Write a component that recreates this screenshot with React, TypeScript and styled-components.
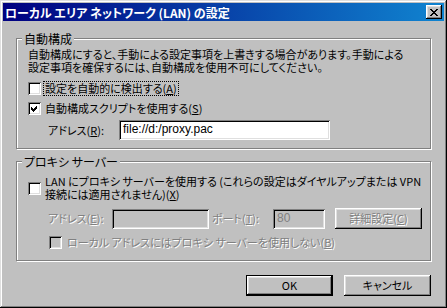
import React from 'react';
import styled, { createGlobalStyle, css } from 'styled-components';

const GlobalStyle = createGlobalStyle`
	html, body {
		margin: 0;
		padding: 0;
		background: #c0c0c0;
	}
`;

const raised = css`
	box-shadow: inset -1px -1px #000, inset 1px 1px #fff, inset -2px -2px #808080,
		inset 2px 2px #dfdfdf;
`;
const sunken = css`
	box-shadow: inset 1px 1px #808080, inset -1px -1px #fff, inset 2px 2px #000,
		inset -2px -2px #dfdfdf;
`;
const disabledText = css`
	color: #808080;
	text-shadow: 1px 1px 0 #fff;
`;

const Window = styled.div`
	width: 447px;
	height: 308px;
	box-sizing: border-box;
	padding: 3px;
	background: #c0c0c0;
	box-shadow: inset -1px -1px #000, inset 1px 1px #dfdfdf, inset -2px -2px #808080,
		inset 2px 2px #fff;
	display: flex;
	flex-direction: column;
	font-family: 'Noto Sans CJK JP', 'Liberation Sans', sans-serif;
	font-size: 11px;
	line-height: 13px;
	font-feature-settings: 'palt';
	color: #000;
`;

const TitleBar = styled.div`
	height: 18px;
	flex: 0 0 18px;
	display: flex;
	align-items: center;
	padding: 0 2px;
	background: linear-gradient(to right, #000080, #1084d0);
`;
const TitleText = styled.span`
	color: #fff;
	font-size: 12px;
	font-weight: 700;
	white-space: nowrap;
`;
const CloseButton = styled.span`
	margin-left: auto;
	width: 16px;
	height: 14px;
	background: #c0c0c0;
	${raised};
	display: flex;
	align-items: center;
	justify-content: center;
	padding-right: 1px;
	box-sizing: border-box;
`;

const Body = styled.div`
	display: flex;
	flex-direction: column;
	padding: 11px 13px 0 13px;
`;

const Group = styled.fieldset<{ $gap?: number }>`
	margin: ${(p) => p.$gap ?? 0}px 0 0 0;
	padding: 0;
	min-width: 0;
	border: 1px solid #808080;
	box-shadow: inset 1px 1px #fff, 1px 1px #fff;
`;
const Legend = styled.legend`
	margin-left: 5px;
	padding: 0 2px;
	font-size: 12px;
	line-height: 13px;
	background: #c0c0c0;
`;
const GroupBody = styled.div<{ $top: number; $bottom: number }>`
	display: flex;
	flex-direction: column;
	padding: ${(p) => p.$top}px 11px ${(p) => p.$bottom}px 11px;
`;

const Description = styled.p`
	margin: 0;
	white-space: nowrap;
`;

const Row = styled.div<{ $top: number; $indent?: number }>`
	display: flex;
	align-items: center;
	margin-top: ${(p) => p.$top}px;
	padding-left: ${(p) => p.$indent ?? 0}px;
	min-height: 16px;
`;

const Box = styled.span<{ $disabled?: boolean }>`
	flex: 0 0 13px;
	width: 13px;
	height: 13px;
	box-sizing: border-box;
	background: ${(p) => (p.$disabled ? '#c0c0c0' : '#fff')};
	${sunken};
	display: flex;
`;

const CheckLabel = styled.span<{ $focused?: boolean; $disabled?: boolean; $gap?: number }>`
	margin-left: ${(p) => p.$gap ?? 2}px;
	padding: 0 1px;
	border: 1px ${(p) => (p.$focused ? 'dotted #000' : 'solid transparent')};
	white-space: nowrap;
	${(p) => p.$disabled && disabledText};
`;

const Key = styled.span`
	text-decoration: underline;
	text-underline-offset: 1px;
`;

const FieldLabel = styled.span<{ $width: number; $left?: number; $disabled?: boolean }>`
	flex: 0 0 ${(p) => p.$width}px;
	margin-left: ${(p) => p.$left ?? 0}px;
	white-space: nowrap;
	${(p) => p.$disabled && disabledText};
`;

const TextBox = styled.div<{ $width: number; $disabled?: boolean }>`
	flex: 0 0 ${(p) => p.$width}px;
	height: 20px;
	box-sizing: border-box;
	padding: 3px 3px 0 4px;
	background: ${(p) => (p.$disabled ? '#c0c0c0' : '#fff')};
	${sunken};
	white-space: nowrap;
	font-size: 12px;
	color: ${(p) => (p.$disabled ? '#808080' : '#000')};
	font-family: 'Liberation Sans', sans-serif;
`;

const PushButton = styled.div<{ $default?: boolean; $disabled?: boolean; $left?: number }>`
	flex: 0 0 87px;
	height: 21px;
	margin-left: ${(p) => p.$left ?? 0}px;
	box-sizing: border-box;
	display: flex;
	align-items: center;
	justify-content: center;
	background: #c0c0c0;
	white-space: nowrap;
	${(p) =>
		p.$default
			? css`
					border: 1px solid #000;
					box-shadow: inset -1px -1px #000, inset 1px 1px #fff, inset -2px -2px #808080,
						inset 2px 2px #dfdfdf;
			  `
			: raised};
	${(p) => p.$disabled && disabledText};
`;

const Footer = styled.div`
	display: flex;
	justify-content: flex-end;
	gap: 11px;
	margin-top: 14px;
`;

const closeRows = ['11000011', '01100110', '00111100', '00011000', '00111100', '01100110', '11000011'];
const closePath = closeRows
	.map((row, y) =>
		row
			.split('')
			.map((c, x) => (c === '1' ? `M${x} ${y}h1v1h-1z` : ''))
			.join('')
	)
	.join('');

const CloseGlyph = () => (
	<svg width="8" height="7" viewBox="0 0 8 7" shapeRendering="crispEdges">
		<path d={closePath} fill="#000" />
	</svg>
);

const Check = () => (
	<svg width="13" height="13" viewBox="0 0 13 13" shapeRendering="crispEdges">
		<path d="M3 5 L5 7 L9 3 L9 6 L5 10 L3 8 Z" fill="#000" />
	</svg>
);

const CheckBox: React.FC<{ checked?: boolean; disabled?: boolean }> = ({ checked, disabled }) => (
	<Box $disabled={disabled}>{checked && <Check />}</Box>
);

export default function App() {
	return (
		<>
			<GlobalStyle />
			<Window>
				<TitleBar>
					<TitleText>ローカル エリア ネットワーク (LAN) の設定</TitleText>
					<CloseButton>
						<CloseGlyph />
					</CloseButton>
				</TitleBar>
				<Body>
					<Group>
						<Legend>自動構成</Legend>
						<GroupBody $top={3} $bottom={8}>
							<Description>
								自動構成にすると、手動による設定事項を上書きする場合があります。手動による
								<br />
								設定事項を確保するには、自動構成を使用不可にしてください。
							</Description>
							<Row $top={6}>
								<CheckBox />
								<CheckLabel $focused>
									設定を自動的に検出する(<Key>A</Key>)
								</CheckLabel>
							</Row>
							<Row $top={4}>
								<CheckBox checked />
								<CheckLabel>
									自動構成スクリプトを使用する(<Key>S</Key>)
								</CheckLabel>
							</Row>
							<Row $top={4} $indent={20}>
								<FieldLabel $width={71}>
									アドレス(<Key>R</Key>):
								</FieldLabel>
								<TextBox $width={211}>file://d:/proxy.pac</TextBox>
							</Row>
						</GroupBody>
					</Group>
					<Group $gap={6}>
						<Legend>プロキシ サーバー</Legend>
						<GroupBody $top={6} $bottom={10}>
							<Row $top={0}>
								<CheckBox />
								<CheckLabel>
									LAN にプロキシ サーバーを使用する (これらの設定はダイヤルアップまたは VPN
									<br />
									接続には適用されません)(<Key>X</Key>)
								</CheckLabel>
							</Row>
							<Row $top={6} $indent={20}>
								<FieldLabel $width={64} $disabled>
									アドレス(<Key>E</Key>):
								</FieldLabel>
								<TextBox $width={97} $disabled />
								<FieldLabel $width={61} $left={3} $disabled>
									ポート(<Key>T</Key>):
								</FieldLabel>
								<TextBox $width={52} $disabled>
									80
								</TextBox>
								<PushButton $left={10} $disabled>
									詳細設定(<Key>C</Key>)
								</PushButton>
							</Row>
							<Row $top={5} $indent={21}>
								<CheckBox disabled />
								<CheckLabel $disabled $gap={3}>
									ローカル アドレスにはプロキシ サーバーを使用しない(<Key>B</Key>)
								</CheckLabel>
							</Row>
						</GroupBody>
					</Group>
					<Footer>
						<PushButton $default>OK</PushButton>
						<PushButton>キャンセル</PushButton>
					</Footer>
				</Body>
			</Window>
		</>
	);
}
